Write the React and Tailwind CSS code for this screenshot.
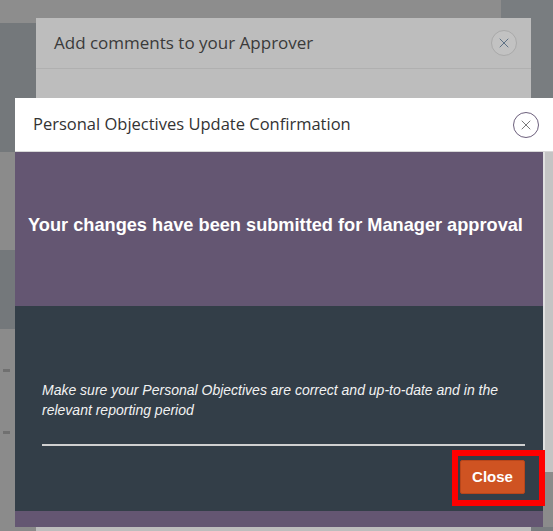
import { X } from "lucide-react";

function CloseCircle({ ring, cross, bg }) {
  return (
    <span
      className={`flex h-[26px] w-[26px] items-center justify-center rounded-full border-[1.5px] ${ring} ${bg}`}
    >
      <X className={`h-[16px] w-[16px] ${cross}`} strokeWidth={1.5} />
    </span>
  );
}

export default function App() {
  return (
    <div className="relative h-[531px] w-[553px] overflow-hidden bg-[#8b8b8b] font-['Open_Sans',sans-serif]">
      {/* page behind the overlay */}
      <div className="flex h-full">
        <div className="flex flex-1 flex-col">
          <div className="h-[23px] bg-[#8d8d8d]" />
          <div className="h-[129px] bg-[#74787b]" />
          <div className="h-[98px] bg-[#8b8b8b]" />
          <div className="h-[79px] bg-[#74787b]" />
          <div className="flex flex-1 flex-col bg-[#8b8b8b] pl-[3px] pt-[40px]">
            <div className="h-[3px] w-[7px] bg-[#707070]" />
            <div className="mt-[59px] h-[3px] w-[7px] bg-[#707070]" />
          </div>
        </div>
        <div className="w-[52px] bg-[#797d80]" />
      </div>

      {/* first dialog, dimmed */}
      <div className="absolute bottom-0 left-[36px] top-[18px] w-[495px] bg-[#bdbdbd]">
        <div className="flex h-[51px] items-center justify-between border-b border-[#b0b0b0] pl-[18px] pr-[14px]">
          <span className="text-[17px] text-[#3a3a3a]">Add comments to your Approver</span>
          <CloseCircle ring="border-[#a9a9a9]" cross="text-[#5e7185]" bg="bg-[#c2c2c2]" />
        </div>
      </div>

      {/* confirmation dialog */}
      <div className="absolute bottom-[4px] left-[15px] right-0 top-[98px] flex flex-col">
        <div className="flex h-[54px] items-center justify-between border-b border-[#d8d8d8] bg-white pl-[18px] pr-[14px]">
          <span className="text-[16.5px] text-[#333333]">Personal Objectives Update Confirmation</span>
          <CloseCircle ring="border-[#6c5f7c]" cross="text-[#7a7a7a]" bg="bg-white" />
        </div>
        <div className="flex flex-1">
          <div className="flex flex-1 flex-col font-['Liberation_Sans',Arial,sans-serif]">
            <div className="flex h-[154px] items-center justify-center bg-[#645672] pb-[6px] pr-[7px]">
              <h2 className="text-[18.2px] font-bold text-white">
                Your changes have been submitted for Manager approval
              </h2>
            </div>
            <div className="flex h-[205px] flex-col bg-[#333e48] pl-[27px] pr-[18px] pt-[74px]">
              <p className="text-[14px] italic leading-[20px] text-[#f2f2f2]">
                Make sure your Personal Objectives are correct and up-to-date and in the
                relevant reporting period
              </p>
              <div className="mt-[24px] h-[2px] bg-[#d0d0d0]" />
              <div className="mt-[14px] flex justify-end">
                <button className="h-[34px] w-[65px] rounded-[2px] border border-[#b8461b] bg-[#cf5322] text-[15px] font-bold text-white">
                  Close
                </button>
              </div>
            </div>
            <div className="flex-1 bg-[#645672]" />
          </div>
          <div className="flex w-[10px] flex-col">
            <div className="h-[320px] border-l-2 border-[#e0e0e0] bg-[#c4c4c4]" />
            <div className="flex-1 bg-[#8b8b8b]" />
          </div>
        </div>
      </div>

      {/* highlight around the button */}
      <div className="absolute left-[452px] top-[450px] h-[56px] w-[93px] border-[6px] border-[#ff0000]" />
    </div>
  );
}
